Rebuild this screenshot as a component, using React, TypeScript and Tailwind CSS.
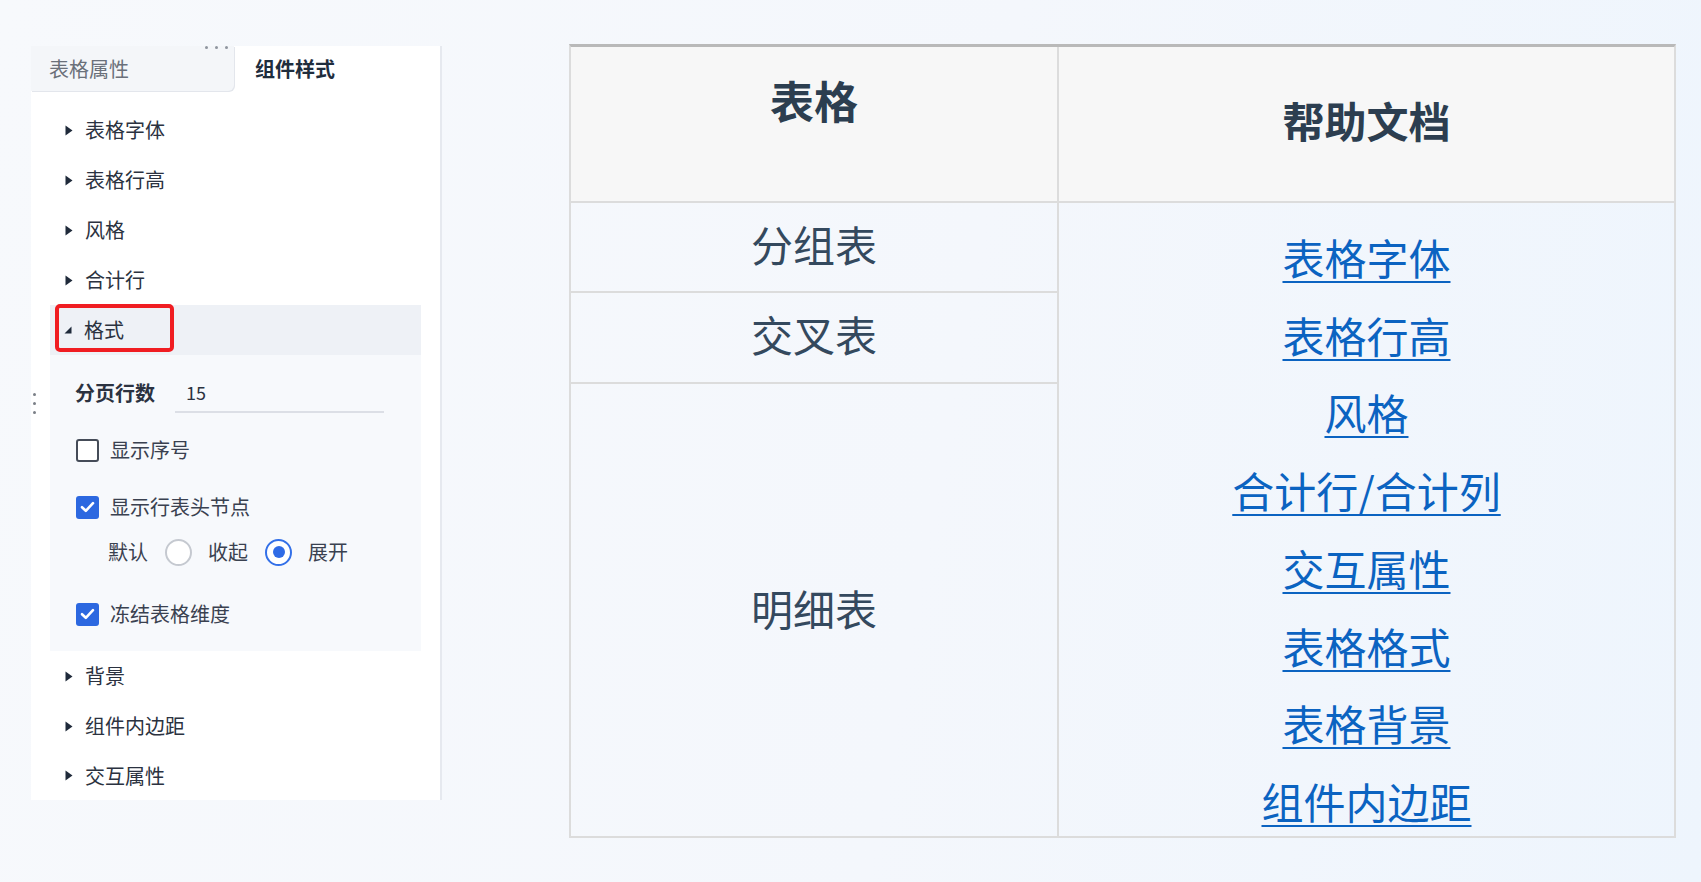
import React from "react";

const Caret = () => (
  <svg width="8" height="11" viewBox="0 0 8 11" className="shrink-0">
    <path d="M0.5 0.5 L7.5 5.5 L0.5 10.5 Z" fill="#1f2a3a" />
  </svg>
);

const CaretDown = () => (
  <svg width="8" height="8" viewBox="0 0 8 8" className="shrink-0">
    <path d="M7.5 0.5 L7.5 7.5 L0.5 7.5 Z" fill="#1f2a3a" />
  </svg>
);

const TreeItem = ({ label }: { label: string }) => (
  <div className="h-[50px] flex items-center pl-[15px]">
    <Caret />
    <span className="ml-[12px] text-[20px] text-[#2b3240]">{label}</span>
  </div>
);

const Check = ({ checked }: { checked: boolean }) =>
  checked ? (
    <div className="w-[23px] h-[23px] rounded-[3px] bg-[#2c68e0] flex items-center justify-center shrink-0">
      <svg width="15" height="12" viewBox="0 0 15 12">
        <path d="M2 6.2 L5.8 9.8 L13 2.2" stroke="#fff" strokeWidth="2.6" fill="none" strokeLinecap="round" strokeLinejoin="round" />
      </svg>
    </div>
  ) : (
    <div className="w-[23px] h-[23px] rounded-[3px] border-2 border-[#454c58] bg-white shrink-0" />
  );

const Radio = ({ checked }: { checked: boolean }) =>
  checked ? (
    <div className="w-[27px] h-[27px] rounded-full border-2 border-[#3370e8] bg-white flex items-center justify-center shrink-0">
      <div className="w-[12px] h-[12px] rounded-full bg-[#2f6be6]" />
    </div>
  ) : (
    <div className="w-[27px] h-[27px] rounded-full border-2 border-[#c5c9d0] bg-white shrink-0" />
  );

function Panel() {
  return (
    <div className="relative ml-[31px] mt-[46px] w-[411px] h-[754px] bg-white border-r-2 border-[#e6e9ef] flex flex-col shrink-0">
      {/* tabs */}
      <div className="h-[45px] flex items-center">
        <div className="relative w-[203px] h-[45px] bg-[#f4f6f9] rounded-br-[6px] shadow-[1px_1px_0_#e3e6ec] pl-[18px] flex items-center text-[20px] text-[#6a707a]">
          表格属性
          <div className="absolute right-[6px] top-[0px] flex gap-[7px]">
            <span className="w-[3px] h-[3px] rounded-full bg-[#8f959e]" />
            <span className="w-[3px] h-[3px] rounded-full bg-[#8f959e]" />
            <span className="w-[3px] h-[3px] rounded-full bg-[#8f959e]" />
          </div>
        </div>
        <div className="ml-[21px] text-[20px] font-bold text-[#1f2d3d]">组件样式</div>
      </div>

      {/* tree */}
      <div className="mx-[19px] mt-[14px] flex flex-col">
        <TreeItem label="表格字体" />
        <TreeItem label="表格行高" />
        <TreeItem label="风格" />
        <TreeItem label="合计行" />
        <div className="relative h-[50px] bg-[#eef1f6] flex items-center pl-[14px]">
          <CaretDown />
          <span className="ml-[12px] text-[20px] text-[#2b3240]">格式</span>
          <div className="absolute left-[5px] top-[-1px] w-[119px] h-[48px] border-[4px] border-[#f01d22] rounded-[5px]" />
        </div>
        <div className="h-[296px] bg-[#f7f9fc] flex flex-col pt-[18px]">
          <div className="h-[40px] flex items-center">
            <span className="ml-[25px] w-[100px] text-[20px] font-bold text-[#2b3240]">分页行数</span>
            <div className="h-[40px] w-[209px] border-b-2 border-[#dcdfe6] pl-[11px] flex items-center text-[18px] text-[#2b3240]">
              15
            </div>
          </div>
          <div className="mt-[14px] h-[46px] flex items-center pl-[26px]">
            <Check checked={false} />
            <span className="ml-[11px] text-[20px] text-[#3a4150]">显示序号</span>
          </div>
          <div className="mt-[11px] h-[46px] flex items-center pl-[26px]">
            <Check checked={true} />
            <span className="ml-[11px] text-[20px] text-[#3a4150]">显示行表头节点</span>
          </div>
          <div className="h-[44px] flex items-center pl-[58px] text-[20px] text-[#3a4150]">
            <span>默认</span>
            <span className="ml-[17px]"><Radio checked={false} /></span>
            <span className="ml-[16px]">收起</span>
            <span className="ml-[17px]"><Radio checked={true} /></span>
            <span className="ml-[16px]">展开</span>
          </div>
          <div className="mt-[17px] h-[46px] flex items-center pl-[26px]">
            <Check checked={true} />
            <span className="ml-[11px] text-[20px] text-[#3a4150]">冻结表格维度</span>
          </div>
        </div>
        <TreeItem label="背景" />
        <TreeItem label="组件内边距" />
        <div className="h-[49px] flex items-center pl-[15px]">
          <Caret />
          <span className="ml-[12px] text-[20px] text-[#2b3240]">交互属性</span>
        </div>
      </div>

      {/* drag handle dots */}
      <div className="absolute left-[2px] top-[347px] flex flex-col gap-[6px]">
        <span className="w-[3px] h-[3px] rounded-full bg-[#7a7f87]" />
        <span className="w-[3px] h-[3px] rounded-full bg-[#7a7f87]" />
        <span className="w-[3px] h-[3px] rounded-full bg-[#7a7f87]" />
      </div>
    </div>
  );
}

const links = ["表格字体", "表格行高", "风格", "合计行/合计列", "交互属性", "表格格式", "表格背景", "组件内边距"];

function HelpTable() {
  return (
    <div className="ml-[127px] mt-[44px] w-[1107px] border-x-2 border-b-2 border-t-[3px] border-[#dcdcdc] border-t-[#b9b9b9] grid grid-cols-[488px_615px] grid-rows-[156px_90px_91px_452px] text-[#34495e] shrink-0">
      <div className="col-start-1 row-start-1 bg-[#f7f7f7] border-r-2 border-b-2 border-[#dcdcdc] flex justify-center pt-[27px]">
        <span className="text-[44px] leading-[52px] font-bold text-[#2c3e50]">表格</span>
      </div>
      <div className="col-start-2 row-start-1 bg-[#f7f7f7] border-b-2 border-[#dcdcdc] flex items-center justify-center pb-[8px]">
        <span className="text-[42px] leading-[52px] font-bold text-[#2c3e50]">帮助文档</span>
      </div>
      <div className="col-start-1 row-start-2 border-r-2 border-b-2 border-[#dcdcdc] flex items-center justify-center pb-[8px] text-[42px]">
        分组表
      </div>
      <div className="col-start-1 row-start-3 border-r-2 border-b-2 border-[#dcdcdc] flex items-center justify-center pb-[8px] text-[42px]">
        交叉表
      </div>
      <div className="col-start-1 row-start-4 border-r-2 border-[#dcdcdc] flex items-center justify-center pb-[6px] text-[42px]">
        明细表
      </div>
      <div className="col-start-2 row-start-2 row-span-3 flex flex-col items-center pt-[15px]">
        {links.map((l) => (
          <a
            key={l}
            href="#"
            className="text-[42px] leading-[77.7px] text-[#0b63c1] underline decoration-2 underline-offset-[6px]"
          >
            {l}
          </a>
        ))}
      </div>
    </div>
  );
}

export default function App() {
  return (
    <div className="w-[1701px] h-[882px] overflow-hidden bg-[linear-gradient(100deg,#f7f9fc_0%,#f4f7fc_55%,#eef5fd_100%)] font-['Noto_Sans_CJK_SC',sans-serif] flex items-start">
      <Panel />
      <HelpTable />
    </div>
  );
}
